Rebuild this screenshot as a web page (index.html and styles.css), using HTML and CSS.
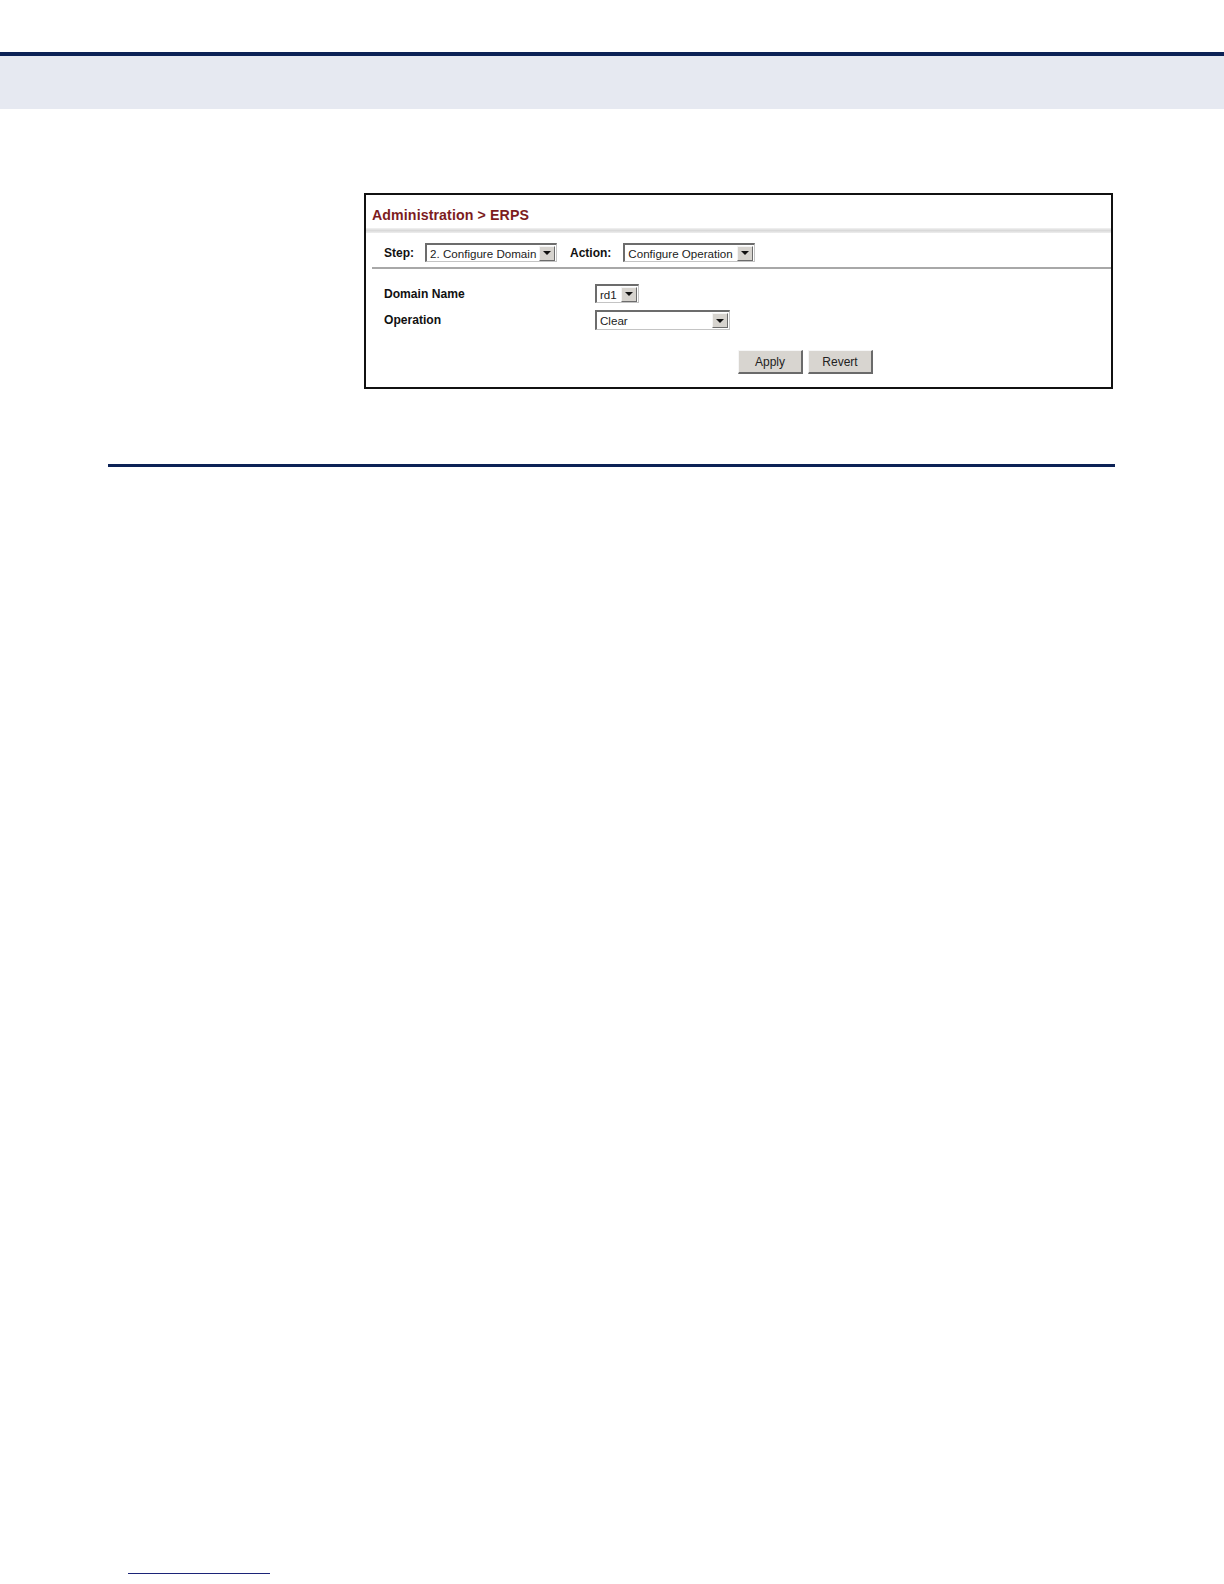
FILE: index.html
```html
<!DOCTYPE html>
<html>
<head>
<meta charset="utf-8">
<link rel="stylesheet" href="styles.css">
</head>
<body>
<div class="page">
  <div class="header-top"></div>
  <div class="header-band"></div>
  <div class="figure">
    <div class="shot">
      <div class="shot-title">Administration &gt; ERPS</div>
      <div class="shot-shade"></div>
      <div class="step-row">
        <span class="lbl">Step:</span>
        <span class="sel sel-step"><span class="sel-text">2. Configure Domain</span><span class="sel-btn"><span class="tri"></span></span></span>
        <span class="lbl lbl-action">Action:</span>
        <span class="sel sel-action"><span class="sel-text">Configure Operation</span><span class="sel-btn"><span class="tri"></span></span></span>
      </div>
      <div class="step-rule"></div>
      <div class="form">
        <div class="form-row">
          <span class="flbl">Domain Name</span>
          <span class="sel sel-rd"><span class="sel-text">rd1</span><span class="sel-btn"><span class="tri"></span></span></span>
        </div>
        <div class="form-row">
          <span class="flbl">Operation</span>
          <span class="sel sel-op"><span class="sel-text">Clear</span><span class="sel-btn"><span class="tri"></span></span></span>
        </div>
      </div>
      <div class="buttons">
        <span class="btn">Apply</span>
        <span class="btn">Revert</span>
      </div>
    </div>
  </div>
  <div class="section-rule"></div>
  <div class="spacer"></div>
  <div class="footnote-rule"></div>
</div>
</body>
</html>
```

FILE: styles.css
```css
html, body {
  margin: 0;
  padding: 0;
  background: #ffffff;
}
body {
  font-family: "Liberation Sans", Arial, sans-serif;
  color: #000;
}
.page {
  width: 1224px;
  height: 1584px;
  position: relative;
  overflow: hidden;
}
.header-top {
  height: 52px;
  border-bottom: 4px solid #0c2256;
}
.header-band {
  height: 53px;
  background: #e6e9f1;
}
.figure {
  padding-top: 84px;
  padding-left: 364px;
}
.shot {
  width: 745px;
  height: 192px;
  border: 2px solid #111;
  background: #fff;
  display: flex;
  flex-direction: column;
}
.shot-title {
  box-sizing: border-box;
  height: 33px;
  padding-left: 6px;
  padding-top: 12px;
  line-height: 16px;
  font-size: 14.2px;
  font-weight: bold;
  color: #7c1c1e;
  letter-spacing: 0.1px;
}
.shot-shade {
  height: 5px;
  background: linear-gradient(#f2f2f2, #d9d9d9 50%, #eeeeee);
}
.step-row {
  box-sizing: border-box;
  height: 34px;
  display: flex;
  align-items: center;
  padding-left: 18px;
  padding-top: 5px;
}
.lbl {
  font-size: 12px;
  font-weight: bold;
  color: #111;
  margin-right: 11px;
}
.lbl-action {
  margin-left: 13px;
  margin-right: 12px;
}
.sel {
  box-sizing: border-box;
  height: 19px;
  display: inline-flex;
  align-items: center;
  background: #fff;
  border-top: 2px solid #6c6c6c;
  border-left: 2px solid #6c6c6c;
  border-right: 1px solid #c4c4c4;
  border-bottom: 1px solid #c4c4c4;
  position: relative;
}
.sel-text {
  flex: 1;
  font-size: 11.6px;
  padding-left: 3px;
  color: #222;
  white-space: nowrap;
  overflow: hidden;
}
.sel-btn {
  box-sizing: border-box;
  width: 16px;
  height: 15px;
  margin-right: 1px;
  background: #d6d3ce;
  border-top: 1px solid #f4f4f4;
  border-left: 1px solid #f4f4f4;
  border-right: 1px solid #6c6c6c;
  border-bottom: 1px solid #6c6c6c;
  display: flex;
  align-items: center;
  justify-content: center;
}
.tri {
  width: 0;
  height: 0;
  border-left: 4px solid transparent;
  border-right: 4px solid transparent;
  border-top: 4px solid #111;
}
.sel-step { width: 132px; }
.sel-action { width: 132px; }
.sel-rd { width: 44px; }
.sel-op { width: 135px; height: 20px; }
.step-rule {
  height: 2px;
  background: #a8a8a8;
  margin-left: 6px;
}
.form {
  padding-top: 15px;
  display: flex;
  flex-direction: column;
  gap: 7px;
}
.form-row {
  display: flex;
  align-items: center;
  padding-left: 18px;
}
.flbl {
  width: 211px;
  font-size: 12.1px;
  font-weight: bold;
  color: #111;
}
.buttons {
  display: flex;
  gap: 5px;
  padding-left: 372px;
  padding-top: 20px;
}
.btn {
  box-sizing: border-box;
  width: 65px;
  height: 24px;
  background: #d8d5d0;
  border-top: 1px solid #f6f6f6;
  border-left: 1px solid #f6f6f6;
  border-right: 2px solid #6a6a6a;
  border-bottom: 2px solid #6a6a6a;
  display: flex;
  align-items: center;
  justify-content: center;
  font-size: 12px;
  color: #222;
}
.section-rule {
  margin-top: 75px;
  margin-left: 108px;
  width: 1007px;
  height: 3px;
  background: #0c2256;
}
.spacer {
  height: 1106px;
}
.footnote-rule {
  margin-left: 128px;
  width: 142px;
  height: 1px;
  background: #1c2478;
}
```
